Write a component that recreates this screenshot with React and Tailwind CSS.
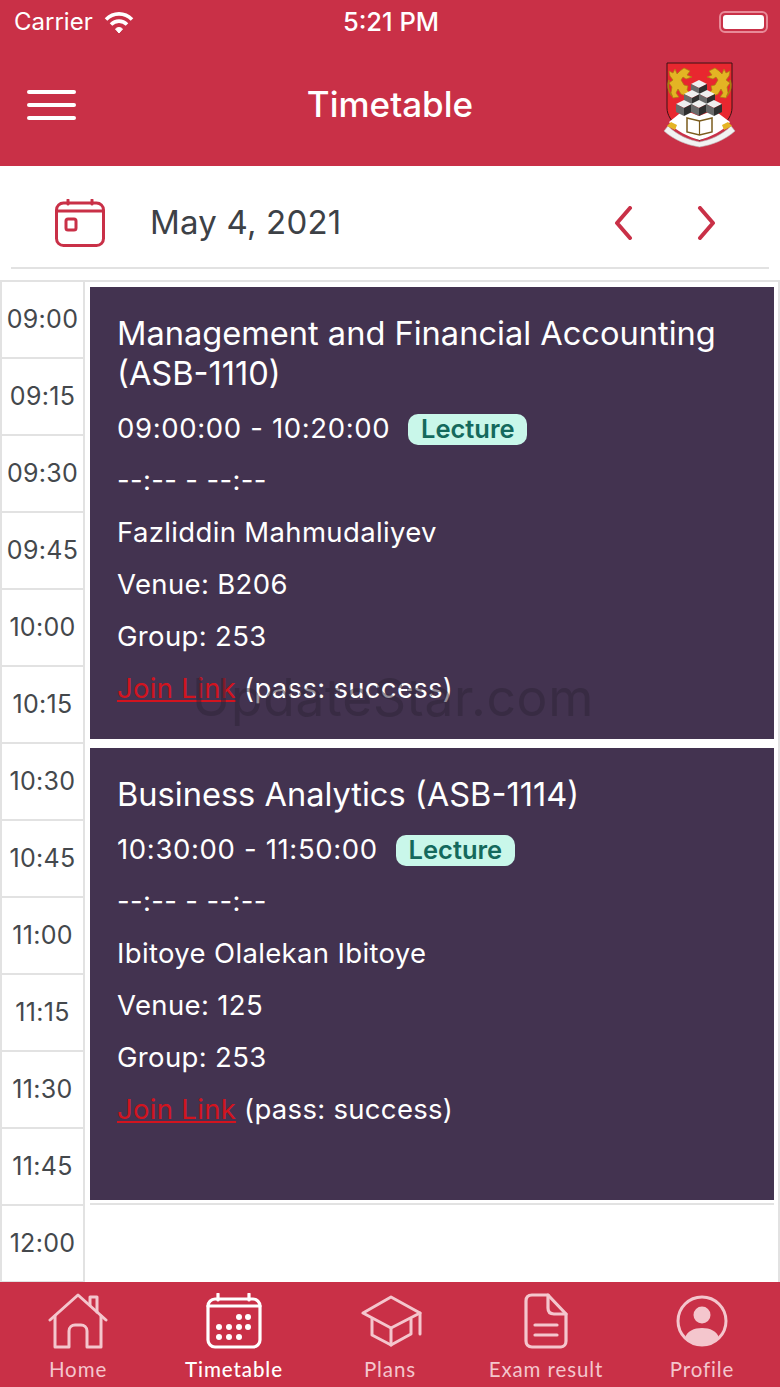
const TIMES = ["09:00","09:15","09:30","09:45","10:00","10:15","10:30","10:45","11:00","11:15","11:30","11:45","12:00"];

const EVENTS = [
  { title: ["Management and Financial Accounting", "(ASB-1110)"], time: "09:00:00 - 10:20:00", teacher: "Fazliddin Mahmudaliyev", venue: "B206" },
  { title: ["Business Analytics (ASB-1114)"], time: "10:30:00 - 11:50:00", teacher: "Ibitoye Olalekan Ibitoye", venue: "125" },
];

const CUBES = [[59,38],[52,48],[67,48],[44,58],[59,58],[74,58]];

function Lion({ flip }) {
  return (
    <g transform={flip ? "translate(119,0) scale(-1,1)" : undefined} fill="#e4b424" stroke="#a9820f" strokeWidth=".7" strokeLinejoin="round">
      <path d="M44 18L50 21L47 25L52 27L46 29L43 27L41 30L44 35L48 36L47 40L50 43L46 46L41 44L38 39L36 43L39 47L33 48L31 43L32 37L29 33L33 30L30 26L29 21L33 23L35 19L37 24L40 21Z" />
      <path d="M29 30C27 36 29 42 32 46" fill="none" strokeWidth="1.6" />
    </g>
  );
}

function Crest() {
  return (
    <svg width="80" height="90" viewBox="20 10 80 90">
      <path d="M27 13H92V58C92 72 74 84 59.500 90C45 84 27 72 27 58Z" fill="#e8272f" stroke="#3a1214" strokeWidth="1" />
      <Lion />
      <Lion flip />
      <path d="M29 72L44 60L59 66L74 60L90 72C84 81 70 87 59.500 90C49 87 35 81 29 72Z" fill="#fff" />
      {CUBES.map(([x, y]) => (
        <g key={x + "-" + y}>
          <path d={`M${x} ${y - 8}L${x + 8} ${y - 4}L${x} ${y}L${x - 8} ${y - 4}Z`} fill="#efefef" />
          <path d={`M${x - 8} ${y - 4}L${x} ${y}V${y + 8}L${x - 8} ${y + 4}Z`} fill="#6a6a6a" />
          <path d={`M${x + 8} ${y - 4}L${x} ${y}V${y + 8}L${x + 8} ${y + 4}Z`} fill="#2f2f2f" />
        </g>
      ))}
      <path d="M47 68L59.500 71L72 68V82L59.500 85L47 82Z" fill="#fff" stroke="#7b5c1e" strokeWidth="1.5" />
      <path d="M59.500 71V85" stroke="#7b5c1e" strokeWidth="1.2" />
      <path d="M24 81C34 90 47 95 59.500 97C72 95 85 90 95 81L91 76C82 85 70 90 59.500 92C49 90 37 85 28 76Z" fill="#f2f2f2" stroke="#b8b8b8" strokeWidth=".6" />
      <path d="M27 76L35 80L37 75L31 72Z" fill="#e4b424" />
      <path d="M92 76L84 80L82 75L88 72Z" fill="#e4b424" />
    </svg>
  );
}

function Wifi() {
  return (
    <svg width="30" height="24" viewBox="0 0 30 24" fill="none" stroke="#fff" strokeWidth="3.6">
      <path d="M2 9.500C9.500 2 20.500 2 28 9.500" />
      <path d="M7 14.500C11.500 10 18.500 10 23 14.500" />
      <path d="M11.500 19C13.500 17 16.500 17 18.500 19L15 23Z" fill="#fff" strokeWidth="1" />
    </svg>
  );
}

function HomeIcon() {
  return (
    <svg width="60" height="56" viewBox="0 0 60 56" fill="none" stroke="currentColor" strokeWidth="3" strokeLinecap="round" strokeLinejoin="round">
      <path d="M2 27L30 2L58 27" />
      <path d="M42 12V4H49V19" />
      <path d="M7 23V54H21V38C21 34 24 32 27 32H33C36 32 39 34 39 38V54H53V23" />
    </svg>
  );
}

function CalendarTab() {
  const dots = [[33,24],[42,24],[13,34],[23,34],[33,34],[42,34],[13,44],[23,44],[33,44]];
  return (
    <svg width="56" height="56" viewBox="0 0 56 56" fill="none" stroke="currentColor" strokeWidth="3.200" strokeLinecap="round">
      <rect x="2" y="6" width="52" height="48" rx="7" />
      <path d="M2 13H54M12 1V7M43 1V7" />
      {dots.map(([x, y]) => <circle key={x + "-" + y} cx={x} cy={y} r="3" fill="currentColor" stroke="none" />)}
    </svg>
  );
}

function CapIcon() {
  return (
    <svg className="ml-[4px]" width="62" height="52" viewBox="0 0 62 52" fill="none" stroke="currentColor" strokeWidth="3" strokeLinecap="round" strokeLinejoin="round">
      <path d="M2 18L30 2L59 18L30 33Z" />
      <path d="M11 24V40L30 50L50 39V24" />
      <path d="M30 33V50" />
      <path d="M59 18V39" />
    </svg>
  );
}

function DocIcon() {
  return (
    <svg width="44" height="56" viewBox="0 0 44 56" fill="none" stroke="currentColor" strokeWidth="3.200" strokeLinecap="round" strokeLinejoin="round">
      <path d="M8 2H24L42 21V48C42 51 40 54 37 54H8C4 54 2 51 2 48V8C2 4 4 2 8 2Z" />
      <path d="M24 2V15C24 19 26 21 30 21H42" />
      <path d="M11 32H33M11 42H33" />
    </svg>
  );
}

function ProfileIcon() {
  return (
    <svg width="52" height="52" viewBox="0 0 52 52" fill="none">
      <circle cx="26" cy="26" r="24" stroke="currentColor" strokeWidth="3" />
      <circle cx="26" cy="20" r="8.500" fill="currentColor" />
      <path d="M9 43C11 36 18 33 26 33C34 33 41 36 43 43C38 48 32 50 26 50C20 50 14 48 9 43Z" fill="currentColor" />
    </svg>
  );
}

const TABS = [
  { label: "Home", Icon: HomeIcon },
  { label: "Timetable", Icon: CalendarTab, active: true },
  { label: "Plans", Icon: CapIcon },
  { label: "Exam result", Icon: DocIcon },
  { label: "Profile", Icon: ProfileIcon },
];

function EventCard({ event }) {
  return (
    <div className="h-[452px] bg-[#433350] pl-[27px] pt-[26px] text-white">
      <div className="text-[32.6px] leading-[40px]">
        {event.title.map((line) => <div key={line}>{line}</div>)}
      </div>
      <div className="mt-[10px] flex h-[51px] items-center pt-[1px]">
        <span className="text-[27.5px] tracking-[0.65px]">{event.time}</span>
        <span className="ml-[18px] flex h-[31px] w-[119px] items-center justify-center rounded-[10px] bg-[#c9f7ea] text-[25.5px] font-semibold text-[#14695c]">Lecture</span>
      </div>
      <div className="h-[52px] text-[27.5px] leading-[52px] tracking-[0.35px]">--:-- - --:--</div>
      <div className="h-[52px] text-[27.5px] leading-[52px] tracking-[0.35px]">{event.teacher}</div>
      <div className="h-[52px] text-[27.5px] leading-[52px] tracking-[0.35px]">Venue: {event.venue}</div>
      <div className="h-[52px] text-[27.5px] leading-[52px] tracking-[0.35px]">Group: 253</div>
      <div className="h-[52px] text-[27.5px] leading-[52px] tracking-[0.3px]">
        <span className="text-[#d2141f] underline">Join Link</span> (pass: success)
      </div>
    </div>
  );
}

export default function App() {
  return (
    <div className="relative h-[1387px] w-[780px] overflow-hidden bg-white font-['Inter',sans-serif]">
      <header className="h-[166px] bg-[#c93047] text-white">
        <div className="flex h-[44px] items-center justify-between pl-[14px] pr-[12px]">
          <div className="flex w-[200px] items-center gap-[11px]">
            <span className="text-[24px]">Carrier</span>
            <Wifi />
          </div>
          <span className="text-[25.5px] font-medium">5:21 PM</span>
          <div className="flex w-[200px] justify-end">
            <div className="flex h-[22px] w-[49px] items-center rounded-[6px] border-2 border-[#e88a98] p-[2px]">
              <div className="h-full w-full rounded-[3px] bg-white" />
            </div>
          </div>
        </div>
        <div className="flex h-[122px] items-center justify-between pl-[27px] pr-[40px]">
          <div className="flex w-[93px] flex-col gap-[9px]">
            <div className="h-[4px] w-[49px] rounded-full bg-white" />
            <div className="h-[4px] w-[49px] rounded-full bg-white" />
            <div className="h-[4px] w-[49px] rounded-full bg-white" />
          </div>
          <h1 className="mb-[2px] text-[35px] font-medium">Timetable</h1>
          <Crest />
        </div>
      </header>

      <div className="mx-[11px] flex h-[103px] items-center border-b-2 border-[#e2e2e2] pt-[12px]">
        <svg className="ml-[44px]" width="50" height="48" viewBox="0 0 50 48" fill="none" stroke="#c93047" strokeWidth="3" strokeLinecap="round">
          <rect x="1.500" y="4" width="47" height="42.500" rx="7" />
          <path d="M1.500 12H48.500M13 1V5M37 1V5" />
          <rect x="11" y="20" width="10" height="11" rx="2" />
        </svg>
        <span className="ml-[45px] text-[33px] tracking-[0.2px] text-[#3d4146]">May 4, 2021</span>
        <svg className="ml-[270px]" width="24" height="34" viewBox="0 0 24 34" fill="none" stroke="#c93047" strokeWidth="4" strokeLinecap="round" strokeLinejoin="round">
          <path d="M19 2L6 17L19 32" />
        </svg>
        <svg className="ml-[60px]" width="24" height="34" viewBox="0 0 24 34" fill="none" stroke="#c93047" strokeWidth="4" strokeLinecap="round" strokeLinejoin="round">
          <path d="M5 2L18 17L5 32" />
        </svg>
      </div>

      <div className="mt-[11px] grid h-[1002px] grid-cols-[83px_1fr] border-x-2 border-t-2 border-[#e2e2e2]">
        <div className="flex flex-col border-r-2 border-[#e2e2e2]">
          {TIMES.map((t) => (
            <div key={t} className="flex h-[77px] shrink-0 items-center justify-center border-b-2 border-[#e2e2e2] pt-[1px] text-[25px] tracking-[0.3px] text-[#44484c]">
              {t}
            </div>
          ))}
        </div>
        <div className="flex flex-col gap-[9px] pl-[5px] pr-[4px] pt-[5px]">
          {EVENTS.map((e) => <EventCard key={e.time} event={e} />)}
          <div className="-mt-[6px] border-b-2 border-[#e2e2e2]" />
        </div>
      </div>

      <div className="pointer-events-none absolute left-[192px] top-[659px] text-[51.5px] tracking-[0.7px] text-[#2e2436]/50">UpdateStar.com</div>

      <nav className="absolute inset-x-0 bottom-0 grid h-[105px] grid-cols-5 bg-[#c93047] font-['Lato',sans-serif] text-white">
        {TABS.map(({ label, Icon, active }) => (
          <div key={label} className={active ? "flex flex-col items-center text-white" : "flex flex-col items-center text-[#f4c6cd]"}>
            <div className="flex h-[74px] items-center justify-center pt-[4px]"><Icon /></div>
            <span className={active ? "mt-[1px] text-[20.5px] font-medium leading-[24px] tracking-[0.9px]" : "mt-[1px] text-[20.5px] leading-[24px] tracking-[0.9px]"}>{label}</span>
          </div>
        ))}
      </nav>
    </div>
  );
}
